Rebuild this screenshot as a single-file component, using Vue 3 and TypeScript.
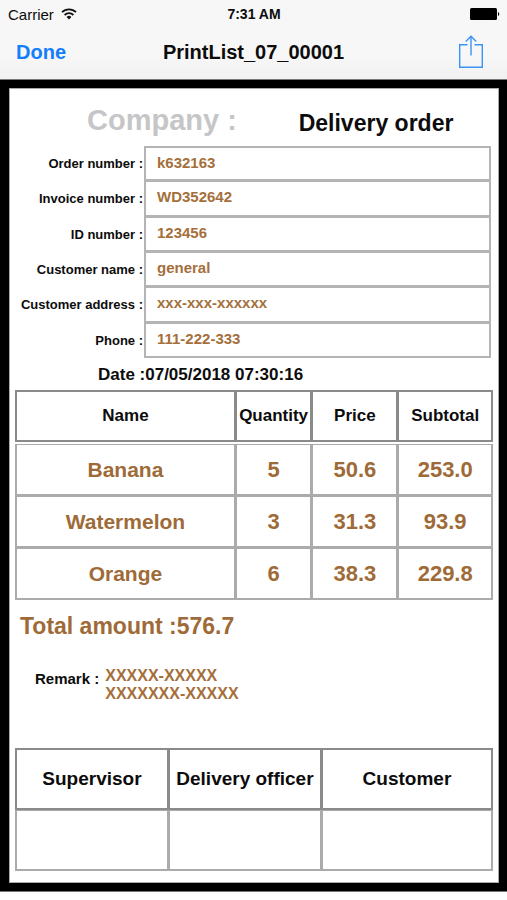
<script setup lang="ts">
interface Field {
  id: string
  label: string
  value: string
}

interface Item {
  name: string
  quantity: number
  price: string
  subtotal: string
}

const fields: Field[] = [
  { id: 'order', label: 'Order number :', value: 'k632163' },
  { id: 'invoice', label: 'Invoice number :', value: 'WD352642' },
  { id: 'ident', label: 'ID number :', value: '123456' },
  { id: 'name', label: 'Customer name :', value: 'general' },
  { id: 'address', label: 'Customer address :', value: 'xxx-xxx-xxxxxx' },
  { id: 'phone', label: 'Phone :', value: '111-222-333' },
]

const items: Item[] = [
  { name: 'Banana', quantity: 5, price: '50.6', subtotal: '253.0' },
  { name: 'Watermelon', quantity: 3, price: '31.3', subtotal: '93.9' },
  { name: 'Orange', quantity: 6, price: '38.3', subtotal: '229.8' },
]

const signatures: string[] = ['Supervisor', 'Delivery officer', 'Customer']
</script>

<template>
  <div class="screen">
    <header class="top">
      <div class="status">
        <div class="carrier">
          <span>Carrier</span>
          <svg width="16" height="12" viewBox="0 0 16 12" aria-hidden="true">
            <g fill="none" stroke="#111" stroke-width="1.8">
              <path d="M1 4.2A10 10 0 0 1 15 4.2" />
              <path d="M3.6 7A6.3 6.3 0 0 1 12.4 7" />
            </g>
            <path d="M8 11.4L5.6 8.9A3.5 3.5 0 0 1 10.4 8.9Z" fill="#111" />
          </svg>
        </div>
        <span class="clock">7:31 AM</span>
        <svg class="battery" width="30" height="12" viewBox="0 0 30 12" aria-hidden="true">
          <rect x="0" y="0" width="27" height="12" rx="1.5" />
          <path d="M28 4A2.2 2.2 0 0 1 28 8Z" />
        </svg>
      </div>
      <nav class="bar">
        <button class="done" type="button">Done</button>
        <h1 class="title">PrintList_07_00001</h1>
        <button class="share" type="button" aria-label="Share">
          <svg width="26" height="34" viewBox="0 0 26 34" fill="none" stroke="#3b93f5" stroke-width="1.4">
            <path d="M9.5 9.7H1.7V32.3H24.3V9.7H16.5" />
            <path d="M13 20.5V1.5M7.8 6.4L13 1.2L18.2 6.4" />
          </svg>
        </button>
      </nav>
    </header>

    <main class="viewer">
      <article class="paper">
        <div class="heading">
          <h2 class="company">Company :</h2>
          <h2 class="doctype">Delivery order</h2>
        </div>

        <div class="fields">
          <div v-for="f in fields" :key="f.id" class="field">
            <label :for="f.id">{{ f.label }}</label>
            <input :id="f.id" type="text" :value="f.value" readonly />
          </div>
        </div>

        <p class="date">Date :07/05/2018 07:30:16</p>

        <table class="grid items">
          <colgroup>
            <col class="c-name" />
            <col class="c-qty" />
            <col class="c-price" />
            <col class="c-sub" />
          </colgroup>
          <thead>
            <tr>
              <th>Name</th>
              <th>Quantity</th>
              <th>Price</th>
              <th>Subtotal</th>
            </tr>
          </thead>
          <tbody>
            <tr v-for="i in items" :key="i.name">
              <td class="item-name">{{ i.name }}</td>
              <td>{{ i.quantity }}</td>
              <td>{{ i.price }}</td>
              <td>{{ i.subtotal }}</td>
            </tr>
          </tbody>
        </table>

        <p class="total">Total amount :576.7</p>

        <div class="remark">
          <span class="remark-label">Remark :</span>
          <p class="remark-text">XXXXX-XXXXX<br />XXXXXXX-XXXXX</p>
        </div>

        <table class="grid signs">
          <colgroup>
            <col class="c-sign" />
            <col class="c-sign" />
            <col class="c-customer" />
          </colgroup>
          <thead>
            <tr>
              <th v-for="s in signatures" :key="s">{{ s }}</th>
            </tr>
          </thead>
          <tbody>
            <tr>
              <td v-for="s in signatures" :key="s"></td>
            </tr>
          </tbody>
        </table>
      </article>
    </main>
  </div>
</template>

<style>
body {
  background: #fff;
}
</style>

<style scoped>
.screen {
  font-family: "Liberation Sans", Arial, sans-serif;
  font-weight: 700;
  color: #0c0c0c;
}

h1,
h2,
p {
  margin: 0;
}

button {
  padding: 0;
  border: 0;
  background: none;
  font: inherit;
  cursor: pointer;
}

.top {
  height: 79px;
  border-bottom: 1px solid #777;
  background: linear-gradient(#f7f7f7 70%, #f1f1f1);
}

.status,
.bar {
  display: grid;
  grid-template-columns: 1fr auto 1fr;
  align-items: center;
}

.status {
  height: 28px;
  padding: 0 7px 0 8px;
}

.carrier {
  display: flex;
  align-items: center;
  gap: 7px;
  font-size: 15px;
  font-weight: 400;
}

.clock {
  font-size: 14px;
}

.battery {
  justify-self: end;
}

.bar {
  height: 48px;
  padding: 0 16px;
}

.done {
  justify-self: start;
  color: #147efb;
  font-size: 20px;
}

.title {
  font-size: 20px;
  line-height: 24px;
}

.share {
  justify-self: end;
  height: 34px;
  margin-right: 7px;
}

.share svg {
  display: block;
}

.viewer {
  padding: 8px 8px 8px 9px;
  border-bottom: 1px solid #777;
  background: #000;
}

.paper {
  padding: 14px 5px 11px;
  border: 1px solid #aaa;
  background: #fff;
}

.heading {
  display: grid;
  grid-template-columns: 57fr 53fr;
  align-items: center;
  height: 32px;
}

.company {
  padding-left: 72px;
  color: #c6c6c8;
  font-size: 29px;
  line-height: 32px;
}

.doctype {
  padding: 6px 0 0 36px;
  font-size: 23px;
  line-height: 28px;
}

.fields {
  display: grid;
  grid-template-rows: repeat(6, 1fr);
  min-height: 212px;
  margin: 11px 2px 0 0;
}

.field {
  display: grid;
  grid-template-columns: 129px 1fr;
  align-items: stretch;
}

.field label {
  align-self: center;
  padding-right: 1px;
  font-size: 13px;
  text-align: right;
  white-space: nowrap;
}

.field input {
  box-sizing: border-box;
  width: 100%;
  min-width: 0;
  padding: 0 11px 3px;
  border: 2px solid #b4b4b4;
  border-top-width: 1px;
  border-radius: 0;
  outline: 0;
  background: #fff;
  color: #a56f3b;
  font: 700 15px "Liberation Sans", Arial, sans-serif;
}

.field:first-child input {
  border-top-width: 2px;
}

.date {
  padding: 7px 0 5px 83px;
  font-size: 17px;
  line-height: 20px;
}

.grid {
  width: 100%;
  table-layout: fixed;
  border-spacing: 0;
  text-align: center;
}

.grid th,
.grid td {
  box-sizing: border-box;
  padding: 0;
  border: 2px solid #ababab;
  border-width: 1px 1px 2px 2px;
}

.grid th {
  border-color: #8a8a8a;
  border-top-width: 2px;
}

.grid th:last-child,
.grid td:last-child {
  border-right-width: 2px;
}

.items th {
  height: 52px;
  font-size: 17px;
}

.items td {
  height: 52px;
  color: #9e6b38;
  font-size: 22px;
}

.items .item-name {
  font-size: 21px;
}

/* Thin gap between the header row and the item rows */
.items tbody::before {
  content: "";
  display: table-row;
  height: 2px;
}

.c-name {
  width: 46%;
}

.c-qty {
  width: 16%;
}

.c-price {
  width: 18%;
}

.c-sub {
  width: 20%;
}

.total {
  padding: 12px 5px 0;
  color: #9e6b38;
  font-size: 23px;
  line-height: 28px;
}

.remark {
  display: flex;
  gap: 6px;
  padding: 27px 20px 0;
}

.remark-label {
  padding-top: 3px;
  font-size: 15px;
  line-height: 18px;
}

.remark-text {
  color: #a56f3b;
  font-size: 16px;
  line-height: 18px;
}

.signs {
  margin-top: 45px;
}

.c-sign {
  width: 32%;
}

.c-customer {
  width: 36%;
}

.signs th {
  height: 62px;
  font-size: 19px;
}

.signs td {
  height: 61px;
}
</style>
